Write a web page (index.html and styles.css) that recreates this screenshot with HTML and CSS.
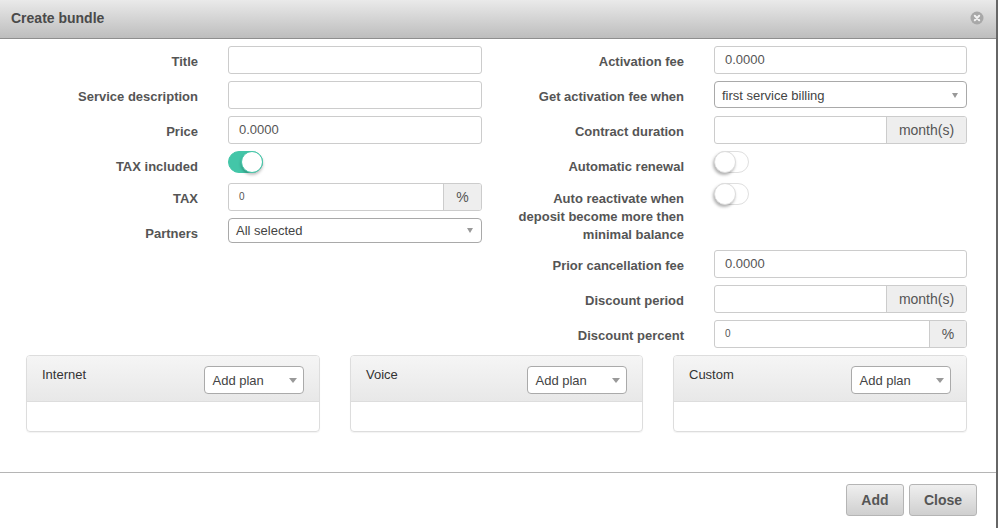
FILE: index.html
```html
<!DOCTYPE html>
<html lang="en">
<head>
<meta charset="utf-8">
<title>Create bundle</title>
<link rel="stylesheet" href="styles.css">
</head>
<body>
<div class="dialog">
  <header class="head">
    <h1 class="head-title">Create bundle</h1>
    <svg class="close-icon" width="14" height="14" viewBox="0 0 14 14"><circle cx="7" cy="7" r="6.5" fill="#a8a8a8"/><path d="M4.8 4.8l4.4 4.4M9.2 4.8l-4.4 4.4" stroke="#f2f2f2" stroke-width="2" stroke-linecap="round"/></svg>
  </header>
  <main class="body">
    <div class="columns">
      <section class="col">
        <div class="row"><label class="lbl">Title</label><div class="field"></div></div>
        <div class="row"><label class="lbl">Service description</label><div class="field"></div></div>
        <div class="row"><label class="lbl">Price</label><div class="field"><span class="val">0.0000</span></div></div>
        <div class="row switch"><label class="lbl">TAX included</label><span class="toggle on"><span class="knob"></span></span></div>
        <div class="row"><label class="lbl">TAX</label><div class="field group"><span class="val small">0</span><span class="addon pct">%</span></div></div>
        <div class="row"><label class="lbl">Partners</label><div class="select"><span>All selected</span><i class="caret"></i></div></div>
      </section>
      <section class="col">
        <div class="row"><label class="lbl">Activation fee</label><div class="field"><span class="val">0.0000</span></div></div>
        <div class="row"><label class="lbl">Get activation fee when</label><div class="select tall"><span>first service billing</span><i class="caret"></i></div></div>
        <div class="row"><label class="lbl">Contract duration</label><div class="field group"><span class="val"></span><span class="addon">month(s)</span></div></div>
        <div class="row switch"><label class="lbl">Automatic renewal</label><span class="toggle"><span class="knob"></span></span></div>
        <div class="row multi"><label class="lbl">Auto reactivate when deposit become more then minimal balance</label><span class="toggle"><span class="knob"></span></span></div>
        <div class="row"><label class="lbl">Prior cancellation fee</label><div class="field"><span class="val">0.0000</span></div></div>
        <div class="row"><label class="lbl">Discount period</label><div class="field group"><span class="val"></span><span class="addon">month(s)</span></div></div>
        <div class="row"><label class="lbl">Discount percent</label><div class="field group"><span class="val small">0</span><span class="addon pct">%</span></div></div>
      </section>
    </div>
    <div class="panels">
      <section class="panel"><div class="panel-head"><span class="panel-title">Internet</span><div class="plan"><span>Add plan</span><i class="caret"></i></div></div><div class="panel-body"></div></section>
      <section class="panel"><div class="panel-head"><span class="panel-title">Voice</span><div class="plan"><span>Add plan</span><i class="caret"></i></div></div><div class="panel-body"></div></section>
      <section class="panel"><div class="panel-head"><span class="panel-title">Custom</span><div class="plan"><span>Add plan</span><i class="caret"></i></div></div><div class="panel-body"></div></section>
    </div>
  </main>
  <footer class="foot">
    <button class="btn">Add</button>
    <button class="btn">Close</button>
  </footer>
</div>
</body>
</html>
```
FILE: styles.css
```css
* { box-sizing: border-box; }
html, body { margin: 0; height: 100%; }
body { background: #fff; font-family: "Liberation Sans", Arial, sans-serif; color: #555; overflow: hidden; }
.dialog { width: 998px; height: 528px; background: #fff; border-right: 2px solid #666; display: flex; flex-direction: column; }
.head { height: 39px; flex: none; display: flex; align-items: center; justify-content: space-between; padding: 0 12px 3px 11px; background: linear-gradient(#eaeaea, #bdbdbd); border-bottom: 1px solid #8e8e8e; }
.head-title { margin: 0; font-size: 14px; font-weight: 700; color: #4a4a4a; }
.close-icon { display: block; }
.body { height: 434px; flex: none; padding: 7px 29px 0 26px; border-bottom: 1px solid #b5b5b5; }
.columns { display: flex; }
.col { display: flex; flex-direction: column; gap: 7px; }
.col:first-child { width: 456px; }
.col:last-child { width: 485px; }
.row { display: flex; align-items: flex-start; height: 28px; }
.row.switch { height: 25px; }
.row.multi { height: 60px; }
.lbl { width: 172px; flex: none; text-align: right; font-size: 13px; font-weight: 700; line-height: 18px; padding-top: 7px; color: #555; margin-right: 30px; }
.col:last-child .lbl { width: 202px; }
.col:last-child .field, .col:last-child .select { width: 253px; }
.row.multi .lbl { padding-left: 36px; }
.field { width: 254px; height: 28px; border: 1px solid #ccc; border-radius: 3px; display: flex; align-items: stretch; background: #fff; }
.val { flex: 1; padding: 0 10px; line-height: 25px; color: #555; font-size: 13px; }
.val.small { font-size: 10px; line-height: 26px; }
.addon { width: 80px; flex: none; background: #eee; border-left: 1px solid #ccc; text-align: center; font-size: 14px; line-height: 26px; color: #555; border-radius: 0 2px 2px 0; }
.addon.pct { width: 38px; }
.col:last-child .addon.pct { width: 37px; }
.select { width: 254px; height: 25px; border: 1px solid #a9a9a9; border-radius: 4px; padding: 0 8px 0 7px; display: flex; align-items: center; justify-content: space-between; font-size: 13px; color: #444; background: #fff; }
.select.tall { height: 27px; padding-top: 1px; }
.caret { width: 0; height: 0; border-left: 3.5px solid transparent; border-right: 3.5px solid transparent; border-top: 5px solid #999; }
.toggle { display: block; width: 35px; height: 22px; border: 1px solid #dfdfdf; border-radius: 11px; background: #fff; position: relative; }
.toggle.on { background: #43c6a8; border-color: #43c6a8; }
.knob { position: absolute; left: -1px; top: -1px; width: 22px; height: 22px; border-radius: 50%; background: #fff; border: 1px solid #ddd; box-shadow: -1px 2px 3px rgba(0,0,0,.3); }
.toggle.on .knob { left: 12px; border-color: #43c6a8; box-shadow: 0 2px 3px rgba(0,0,0,.25); }
.panels { display: grid; grid-template-columns: 294px 293px 294px; column-gap: 30px; margin-top: 7px; }
.panel { height: 77px; border: 1px solid #ddd; border-radius: 4px; overflow: hidden; box-shadow: 0 1px 1px rgba(0,0,0,.05); }
.panel-head { height: 46px; display: flex; justify-content: space-between; align-items: flex-start; padding: 10px 15px 0; background: linear-gradient(#f5f5f5, #e8e8e8); border-bottom: 1px solid #ddd; }
.panel-title { font-size: 13px; line-height: 18px; color: #333; }
.plan { width: 100px; height: 28px; border: 1px solid #aaa; border-radius: 4px; background: #fff; display: flex; align-items: center; justify-content: space-between; padding: 0 6px 0 7.5px; font-size: 13px; color: #444; }
.plan .caret { border-left-width: 4px; border-right-width: 4px; }
.foot { flex: 1; display: flex; justify-content: flex-end; align-items: flex-start; gap: 5px; padding: 11px 19px 0 0; }
.btn { height: 32px; min-width: 58px; padding: 0 14px; border: 1px solid #b5b5b5; border-radius: 3px; background: linear-gradient(#efefef, #cfcfcf); font-family: inherit; font-size: 14px; font-weight: 700; color: #555; }
```
